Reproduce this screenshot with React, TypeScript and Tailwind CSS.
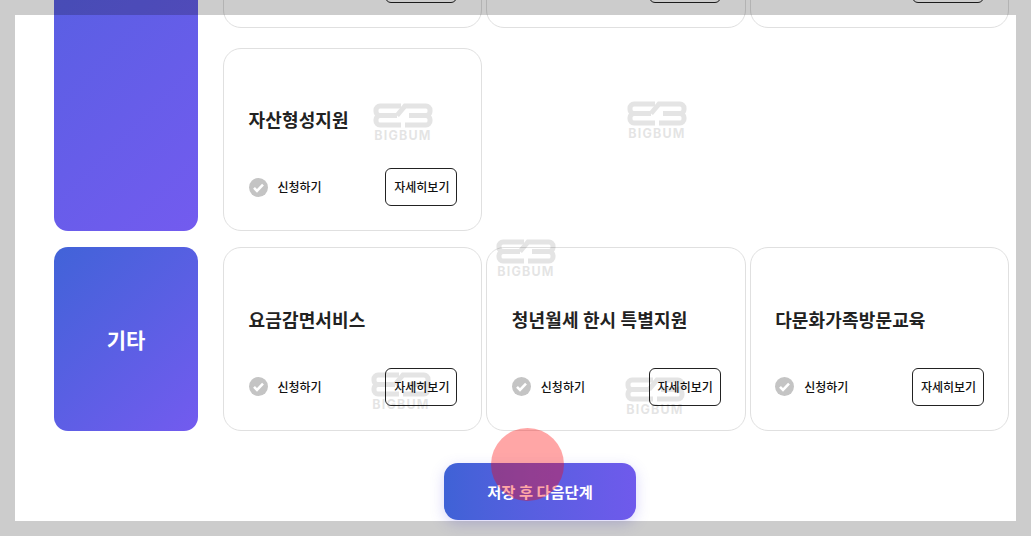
const font = { fontFamily: '"Noto Sans CJK KR", "Noto Sans", sans-serif' };

const Watermark = ({ className }: { className: string }) => (
  <div className={`pointer-events-none absolute w-[60px] opacity-10 ${className}`}>
    <svg viewBox="0 0 60 25" className="block h-[25px] w-[60px]" fill="none" stroke="#000" strokeWidth="5">
      <path d="M28 3H7a4 4 0 0 0-4 4v1.500a4 4 0 0 0 4 4h17" />
      <path d="M7 12.500a4 4 0 0 0-4 4v1.500a4 4 0 0 0 4 4h21" />
      <path d="M24 12.500l8-9.500h21a4 4 0 0 1 4 4v1.500a4 4 0 0 1-4 4H36" />
      <path d="M53 12.500a4 4 0 0 1 4 4v1.500a4 4 0 0 1-4 4H32" />
    </svg>
    <div className="mt-[1px] text-center text-[12.500px] leading-[13px] font-bold tracking-[1.200px] text-black" style={{ fontFamily: '"Inter", sans-serif' }}>
      BIGBUM
    </div>
  </div>
);

const Card = ({ title }: { title?: string }) => (
  <div className="flex h-[183.5px] flex-col rounded-[18px] border border-[#e0e0e0] bg-white pr-[24px] pb-[24px] pl-[24.500px]">
    <div className="flex h-[120px] items-center pt-[22px] text-[18px] leading-[24px] font-bold tracking-[0.15px] text-[#222]">{title}</div>
    <div className="mt-auto flex items-center justify-between">
      <div className="flex items-center gap-[10px]">
        <svg viewBox="0 0 19 19" className="h-[19px] w-[19px]">
          <circle cx="9.5" cy="9.5" r="9.5" fill="#c4c4c4" />
          <path d="M5 9.800l3 3 6-6.200" fill="none" stroke="#fff" strokeWidth="2.600" />
        </svg>
        <span className="text-[12px] font-[450] text-[#111]">신청하기</span>
      </div>
      <button className="h-[38px] w-[72px] rounded-[6px] border border-[#222] pl-[1px] text-[12px] font-[450] text-[#111]">자세히보기</button>
    </div>
  </div>
);

export default function App() {
  return (
    <div className="relative h-[536px] overflow-hidden bg-white" style={font}>
      <div className="-mt-[156px] flex flex-col gap-4 pr-[22px] pl-[54px]">
        <div className="flex gap-[25px]">
          <div className="w-[144px] shrink-0 rounded-[14px] bg-[linear-gradient(135deg,#4163d8_-40%,#735bef)]" />
          <div className="grid flex-1 grid-cols-3 gap-x-1 gap-y-5">
            <Card />
            <Card />
            <Card />
            <Card title="자산형성지원" />
          </div>
        </div>
        <div className="flex gap-[25px]">
          <div className="flex w-[144px] shrink-0 items-center justify-center rounded-[14px] bg-[linear-gradient(135deg,#4163d8,#735bef)] pt-[1px] text-[21px] font-bold text-white">
            기타
          </div>
          <div className="grid flex-1 grid-cols-3 gap-1">
            <Card title="요금감면서비스" />
            <Card title="청년월세 한시 특별지원" />
            <Card title="다문화가족방문교육" />
          </div>
        </div>
      </div>
      <button className="mt-8 ml-[444px] h-[57px] w-[192px] rounded-[14px] bg-gradient-to-r from-[#3f62d6] to-[#6f5aec] text-[15.300px] font-bold text-white shadow-[0_4px_14px_rgba(100,90,235,0.25)]">
        저장 후 다음단계
      </button>

      <Watermark className="top-[103px] left-[373px]" />
      <Watermark className="top-[101px] left-[627px]" />
      <Watermark className="top-[239px] left-[496px]" />
      <Watermark className="top-[372px] left-[371px]" />
      <Watermark className="top-[377px] left-[625px]" />

      <div className="pointer-events-none absolute top-[428px] left-[491px] h-[73px] w-[73px] rounded-full bg-[#ff0000]/35" />
      <div className="pointer-events-none absolute inset-0 border-[15px] border-black/20" />
    </div>
  );
}
